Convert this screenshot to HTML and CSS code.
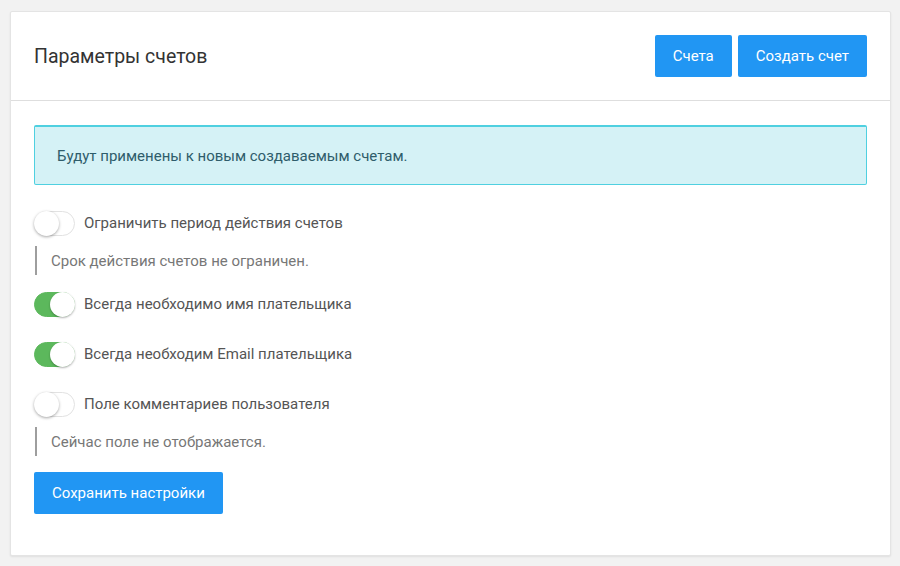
FILE: index.html
```html
<!DOCTYPE html>
<html lang="ru">
<head>
<meta charset="utf-8">
<title>Параметры счетов</title>
<link rel="stylesheet" href="styles.css">
</head>
<body>
<div class="card">
  <div class="card-header">
    <h2 class="title">Параметры счетов</h2>
    <div class="actions">
      <button class="btn">Счета</button>
      <button class="btn">Создать счет</button>
    </div>
  </div>
  <div class="card-body">
    <div class="alert">Будут применены к новым создаваемым счетам.</div>

    <label class="row first">
      <span class="switch"><span class="knob"></span></span>
      <span class="label">Ограничить период действия счетов</span>
    </label>
    <div class="help">Срок действия счетов не ограничен.</div>

    <label class="row after-help">
      <span class="switch on"><span class="knob"></span></span>
      <span class="label">Всегда необходимо имя плательщика</span>
    </label>

    <label class="row">
      <span class="switch on"><span class="knob"></span></span>
      <span class="label">Всегда необходим Email плательщика</span>
    </label>

    <label class="row">
      <span class="switch"><span class="knob"></span></span>
      <span class="label">Поле комментариев пользователя</span>
    </label>
    <div class="help">Сейчас поле не отображается.</div>

    <button class="btn save">Сохранить настройки</button>
  </div>
</div>
</body>
</html>
```
FILE: styles.css
```css
* { box-sizing: border-box; }
html, body { margin: 0; padding: 0; }
body {
  background: #f2f2f2;
  font-family: Roboto, "Liberation Sans", Arial, sans-serif;
  color: #555;
  width: 900px;
  height: 566px;
  overflow: hidden;
}
.card {
  margin: 11px 9px 0 10px;
  height: 545px;
  background: #fff;
  border: 1px solid #e4e4e4;
  border-radius: 2px;
  box-shadow: 0 1px 2px rgba(0,0,0,0.08);
}
.card-header {
  height: 89px;
  display: flex;
  align-items: center;
  justify-content: space-between;
  padding: 0 23px;
  border-bottom: 1px solid #dedede;
}
.title {
  margin: 0;
  font-size: 19.5px;
  font-weight: 400;
  color: #333;
}
.actions { display: flex; gap: 6px; }
.btn {
  font-family: inherit;
  font-size: 15px;
  color: #fff;
  background: #2196f3;
  border: none;
  border-radius: 2px;
  height: 42px;
  padding: 0 18px;
  cursor: pointer;
}
.card-body {
  padding: 24px 23px;
  display: flex;
  flex-direction: column;
  align-items: flex-start;
}
.alert {
  align-self: stretch;
  height: 60px;
  display: flex;
  align-items: center;
  padding: 0 22px;
  background: #d5f2f6;
  border: 1px solid #4fd0e0;
  border-top-width: 2px;
  border-radius: 2px;
  color: #2f5d6b;
  font-size: 15px;
}
.row {
  display: flex;
  align-items: center;
  height: 28px;
  margin-top: 22px;
  cursor: pointer;
}
.row.first { margin-top: 24px; }
.row.after-help { margin-top: 15px; }
.switch {
  position: relative;
  width: 41px;
  height: 25px;
  border-radius: 13px;
  border: 1px solid #e2e2e2;
  background: #fff;
  margin-right: 9px;
  flex: none;
}
.switch .knob {
  position: absolute;
  top: -1px;
  left: -1px;
  width: 25px;
  height: 25px;
  border-radius: 50%;
  background: #fff;
  box-shadow: 0 1px 3px rgba(0,0,0,0.35);
}
.switch.on {
  background: #5cb85c;
  border-color: #5cb85c;
}
.switch.on .knob {
  left: auto;
  right: -1px;
  box-shadow: 0 1px 2px rgba(0,0,0,0.3);
}
.label {
  font-size: 15px;
  color: #555;
}
.help {
  margin-top: 9px;
  margin-left: 1px;
  height: 29px;
  display: flex;
  align-items: center;
  padding-left: 14px;
  border-left: 2px solid #9e9e9e;
  font-size: 15px;
  color: #777;
}
.save {
  margin-top: 16px;
  padding: 0 18px;
}
```
